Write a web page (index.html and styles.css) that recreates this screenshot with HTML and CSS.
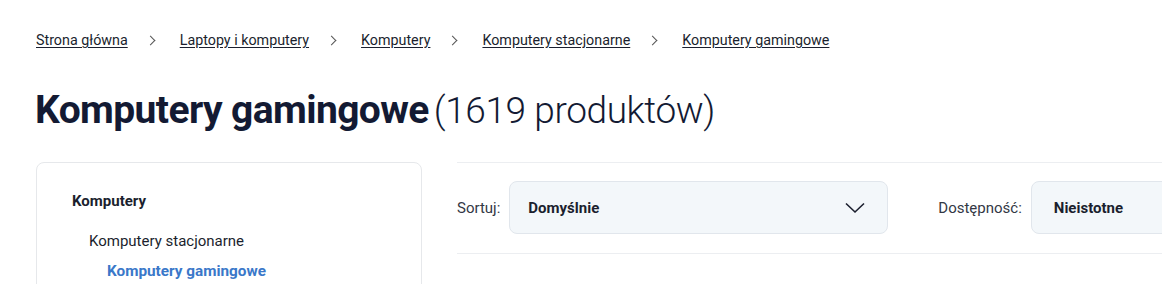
FILE: index.html
```html
<!DOCTYPE html>
<html lang="pl">
<head>
    <meta charset="UTF-8">
    <title>Komputery gamingowe</title>
    <link rel="stylesheet" href="styles.css">
</head>
<body>
    <nav class="breadcrumbs">
        <a href="#">Strona główna</a>
        <span class="sep"></span>
        <a href="#">Laptopy i komputery</a>
        <span class="sep"></span>
        <a href="#">Komputery</a>
        <span class="sep"></span>
        <a href="#">Komputery stacjonarne</a>
        <span class="sep"></span>
        <a href="#">Komputery gamingowe</a>
    </nav>

    <h1 class="title">Komputery gamingowe<span class="count">(1619 produktów)</span></h1>

    <div class="layout">
        <aside class="sidebar">
            <div class="cat cat-top">Komputery</div>
            <div class="cat cat-sub">Komputery stacjonarne</div>
            <div class="cat cat-active">Komputery gamingowe</div>
        </aside>

        <section class="content">
            <div class="toolbar">
                <div class="filter">
                    <span class="filter-label">Sortuj:</span>
                    <div class="select select-sort">
                        <span>Domyślnie</span>
                        <svg width="20" height="12" viewBox="0 0 20 12"><path d="M1 1.5 L10 10 L19 1.5" fill="none" stroke="#1b1f2e" stroke-width="1.6"/></svg>
                    </div>
                </div>
                <div class="filter">
                    <span class="filter-label">Dostępność:</span>
                    <div class="select select-avail">
                        <span>Nieistotne</span>
                    </div>
                </div>
            </div>
        </section>
    </div>
</body>
</html>
```

FILE: styles.css
```css
body {
    margin: 0;
    padding: 0 0 0 36px;
    font-family: Roboto, "Noto Sans", sans-serif;
    color: #1b1f2e;
    background: #fff;
    overflow: hidden;
}
.breadcrumbs {
    display: flex;
    align-items: center;
    padding-top: 30px;
    height: 20px;
    font-size: 14.3px;
    line-height: 20px;
}
.breadcrumbs a {
    color: #1b1f2e;
    text-decoration: underline;
    text-underline-offset: 2px;
}
.sep {
    width: 6px;
    height: 6px;
    border-top: 1.2px solid #555;
    border-right: 1.2px solid #555;
    transform: rotate(45deg);
    margin: 0 26px 0 19px;
}
.title {
    margin: 38px 0 0 -1px;
    font-size: 39px;
    line-height: 44px;
    font-weight: 700;
    color: #131a33;
    letter-spacing: -0.6px;
}
.count {
    font-weight: 300;
    font-size: 37px;
    margin-left: 5px;
    letter-spacing: -0.4px;
}
.layout {
    display: grid;
    grid-template-columns: 386px 1fr;
    gap: 35px;
    margin-top: 29px;
}
.sidebar {
    border: 1px solid #e6e8eb;
    border-radius: 8px;
    padding: 28px 35px 0;
    height: 140px;
    font-size: 15px;
    line-height: 20px;
}
.cat-top {
    font-weight: 700;
}
.cat-sub {
    margin: 20px 0 0 17px;
}
.cat-active {
    margin: 10px 0 0 35px;
    font-weight: 700;
    font-size: 15.3px;
    color: #3a78c9;
}
.content {
    min-width: 0;
}
.toolbar {
    display: flex;
    gap: 50px;
    border-top: 1px solid #eceef1;
    border-bottom: 1px solid #eceef1;
    padding: 18px 0 19px;
    white-space: nowrap;
}
.filter {
    display: flex;
    align-items: center;
    gap: 9px;
}
.filter-label {
    color: #333845;
    font-size: 15px;
}
.select {
    display: flex;
    align-items: center;
    justify-content: space-between;
    box-sizing: border-box;
    height: 53px;
    padding: 0 22px 0 18px;
    background: #f3f7fa;
    border: 1px solid #e1e6ec;
    border-radius: 8px;
    font-weight: 700;
    font-size: 15px;
}
.select-sort {
    width: 379px;
}
.select-avail {
    width: 300px;
    padding-left: 22px;
}
```
